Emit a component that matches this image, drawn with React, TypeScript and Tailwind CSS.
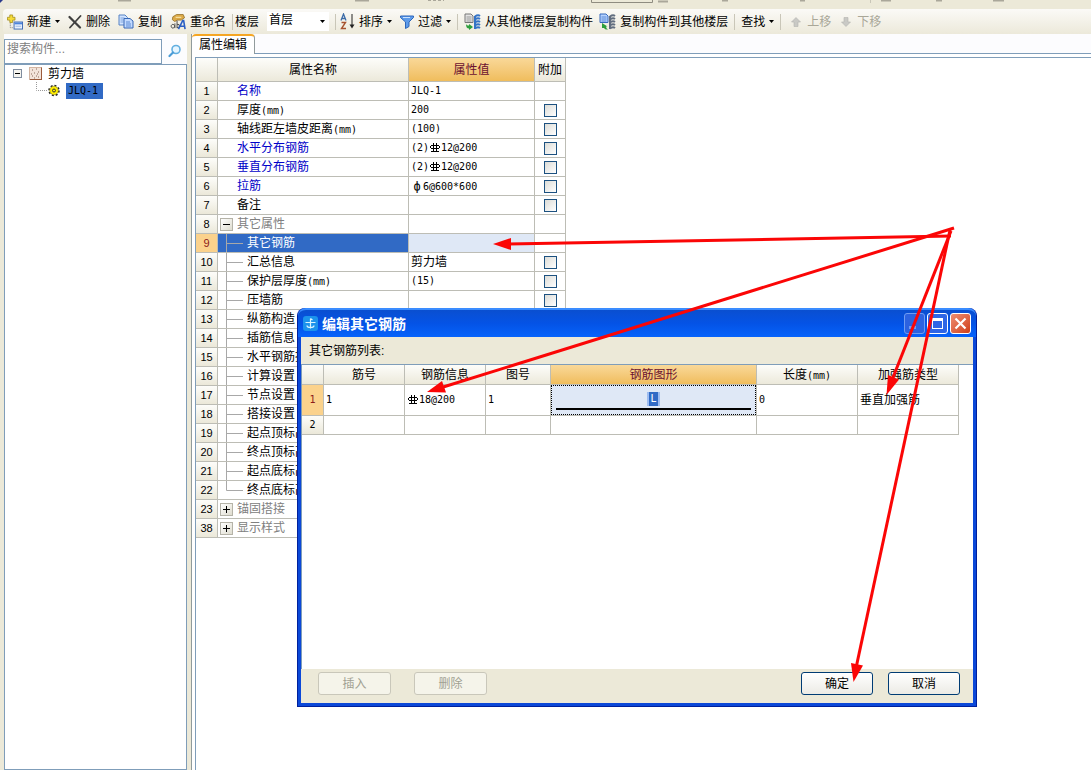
import type { ReactNode } from 'react';

interface PropertyRow {
  no: number;
  name: string;
  unit?: string;
  value?: ReactNode;
  kind?: 'link' | 'group' | 'child';
  open?: boolean;
  check?: boolean;
  last?: boolean;
}

const mono = "text-[10px] font-['DejaVu_Sans_Mono','Noto_Sans_CJK_SC',monospace]";

function Rebar() {
  return (
    <svg viewBox="0 0 12 11" className="inline-block w-3 h-[11px] align-[-2px]" fill="none" stroke="#000">
      <path d="M2 3.500h8M2 6.500h8M1.500 4v2M10.500 4v2M4.500 1v9M7.500 1v9M2 9.500h8" />
    </svg>
  );
}

const rows: PropertyRow[] = [
  { no: 1, name: '名称', kind: 'link', value: 'JLQ-1' },
  { no: 2, name: '厚度', unit: '(mm)', value: '200', check: true },
  { no: 3, name: '轴线距左墙皮距离', unit: '(mm)', value: '(100)', check: true },
  { no: 4, name: '水平分布钢筋', kind: 'link', value: <>(2)<Rebar />12@200</>, check: true },
  { no: 5, name: '垂直分布钢筋', kind: 'link', value: <>(2)<Rebar />12@200</>, check: true },
  { no: 6, name: '拉筋', kind: 'link', value: <><span className="inline-block w-3 text-center text-xs leading-4">ф</span>6@600*600</>, check: true },
  { no: 7, name: '备注', check: true },
  { no: 8, name: '其它属性', kind: 'group', open: true },
  { no: 9, name: '其它钢筋', kind: 'child' },
  { no: 10, name: '汇总信息', kind: 'child', value: <span className="text-xs">剪力墙</span>, check: true },
  { no: 11, name: '保护层厚度', unit: '(mm)', kind: 'child', value: '(15)', check: true },
  { no: 12, name: '压墙筋', kind: 'child', check: true },
  { no: 13, name: '纵筋构造', kind: 'child', check: true },
  { no: 14, name: '插筋信息', kind: 'child', check: true },
  { no: 15, name: '水平钢筋拐角', kind: 'child', check: true },
  { no: 16, name: '计算设置', kind: 'child', check: true },
  { no: 17, name: '节点设置', kind: 'child', check: true },
  { no: 18, name: '搭接设置', kind: 'child', check: true },
  { no: 19, name: '起点顶标高', kind: 'child', check: true },
  { no: 20, name: '终点顶标高', kind: 'child', check: true },
  { no: 21, name: '起点底标高', kind: 'child', check: true },
  { no: 22, name: '终点底标高', kind: 'child', check: true, last: true },
  { no: 23, name: '锚固搭接', kind: 'group' },
  { no: 38, name: '显示样式', kind: 'group' },
];

const headBg = 'bg-linear-to-b from-[#fdfdfa] to-[#ebe8d9]';
const activeBg = 'bg-linear-to-b from-[#f9d898] to-[#f0bd5c]';

function Caret() {
  return (
    <svg viewBox="0 0 5 3" className="w-[5px] h-[3px] shrink-0">
      <path d="M0 0h5L2.500 3z" fill="currentColor" />
    </svg>
  );
}

function Divider() {
  return <span className="w-px h-4 bg-[#c9c6b8] shrink-0" />;
}

function NewIcon() {
  return (
    <svg viewBox="0 0 17 17" className="w-4 h-4 shrink-0">
      <path d="M3 1h3v2.500h2.500v3H6V9H3V6.500H.5v-3H3z" fill="#f6dc3a" stroke="#a08a18" strokeWidth=".8" />
      <path d="M3.500 10v4.500H7" fill="none" stroke="#777" strokeDasharray="1 1" />
      <rect x="7.500" y="8.500" width="9" height="7.500" fill="#e8f1fd" stroke="#3c68b4" />
      <path d="M8 9h8v2H8z" fill="#4b83dd" />
      <path d="M9 13h6" stroke="#9db9e4" />
    </svg>
  );
}

function CrossIcon() {
  return (
    <svg viewBox="0 0 14 14" className="w-[14px] h-[14px] shrink-0" fill="none" stroke="#3f3f3f" strokeLinecap="round">
      <path d="M1.500 2l10.500 10.500" strokeWidth="2.200" />
      <path d="M12.500 1L2 12.500" strokeWidth="1.800" />
    </svg>
  );
}

function CopyIcon() {
  return (
    <svg viewBox="0 0 16 15" className="w-4 h-[15px] shrink-0">
      <path d="M1 1h6l2.500 2.500V11H1z" fill="#d2e4ff" stroke="#5682c4" />
      <path d="M2.500 4h4M2.500 6h3M2.500 8h3" stroke="#7da3de" />
      <path d="M6 4.500h6l3 2.500v7H6z" fill="#c2daff" stroke="#3767b6" />
      <path d="M8 8h4M8 10h5M8 12h5" stroke="#5c8ad4" />
    </svg>
  );
}

function RenameIcon() {
  return (
    <svg viewBox="0 0 17 17" className="w-4 h-4 shrink-0">
      <path d="M3 3l4-2.500h7L15.500 4 12 6.500H8L5 8 2.500 6z" fill="#dcaa48" stroke="#8d6a22" strokeWidth=".8" />
      <path d="M6 3.500h6" stroke="#fff0bd" />
      <path d="M3 11a1.800 2 0 1 0 .1 0M5.200 10v5M7.500 7v8M7.500 11q3-.5 2.500 2-.5 2-2.500 1.500" fill="none" stroke="#444" />
      <path d="M9 16l4.500-9h1L16 16M11 13h4.500" fill="none" stroke="#2c60c4" strokeWidth="1.700" />
    </svg>
  );
}

function SortIcon() {
  return (
    <svg viewBox="0 0 15 17" className="w-[15px] h-[17px] shrink-0" fill="none">
      <path d="M1 7.500L3.500 1 6 7.500M2 5.500h3" stroke="#3d6ca8" strokeWidth="1.300" />
      <path d="M1.500 9.500h4l-4 6h4.500" stroke="#a6522e" strokeWidth="1.400" />
      <path d="M12 1v12" stroke="#222" />
      <path d="M9.500 11.500h5L12 15.500z" fill="#222" />
    </svg>
  );
}

function FilterIcon() {
  return (
    <svg viewBox="0 0 14 14" className="w-[14px] h-[14px] shrink-0">
      <path d="M.5 1h13v1.500L9 7v4.500L5.500 13.500V7L.5 2.500z" fill="#5d9bea" stroke="#2c65b9" />
      <path d="M3 2.500h7" stroke="#c9e2ff" />
    </svg>
  );
}

function FloorIcon({ flip }: { flip?: boolean }) {
  return (
    <svg viewBox="0 0 17 17" className="w-[17px] h-[17px] shrink-0">
      <path d="M1 1h6l2 2v6.500H1z" fill={flip ? '#b5d2ff' : '#e4e4e4'} stroke={flip ? '#3769bd' : '#777'} />
      <path d="M2.500 4h5M2.500 6h5M2.500 8h5" stroke={flip ? '#5c8ad4' : '#999'} />
      <path d="M11 3.500q3-2 5-.5M11 6.500q3-2 5-.5M11 9.500q3-2 5-.5M11 12.500q3-2 5-.5M11 15.500q3-2 5-.5M11 3v13" fill="none" stroke={flip ? '#626e80' : '#3473c6'} strokeWidth="2" />
      <path d={flip ? 'M3 10v5h2q1 2 4 1.500-2-1-2-3h1.500z' : 'M2 11q1 2 3 1.500V11l4 3-4 3v-1.500q-3 0-3-4.500z'} fill="#2c9e3c" />
    </svg>
  );
}

function MoveArrow({ down }: { down?: boolean }) {
  return (
    <svg viewBox="0 0 10 10" className={`w-[10px] h-[10px] mr-0.5 shrink-0 ${down ? 'rotate-180' : ''}`}>
      <path d="M5 .5L9.500 5H7v4.500H3V5H.5z" fill="#c9c9c5" stroke="#b4b4ae" strokeWidth=".6" />
    </svg>
  );
}

function ToolButton({ icon, label, caret, disabled }: { icon?: ReactNode; label: string; caret?: boolean; disabled?: boolean }) {
  return (
    <button disabled={disabled} className="flex items-center gap-1 whitespace-nowrap disabled:text-[#a9a798]">
      {icon}
      <span>{label}</span>
      {caret && <Caret />}
    </button>
  );
}

// lower edge of the toolbar above, most of it is scrolled out of view
function UpperToolbar() {
  return (
    <div className="h-[9px] overflow-hidden">
      <svg viewBox="0 0 1091 9" className="w-[1091px] h-[9px]" fill="none" stroke="#aaa79a">
        <path d="M0 0h3L0 3z" fill="#2a3a8c" stroke="none" />
        <path d="M591.500 0v2.500h61V0" stroke="#8f8c80" />
        <path d="M118 .5h13M355 .5h14M658 1.500h10M722 .5h6M800 .5h5M881 .5h10M936 .5h6M993 .5h11" strokeWidth="2" />
        <path d="M428 .5h16" strokeDasharray="3 2" />
        <path d="M870.500 0v3" stroke="#c9c6b8" />
      </svg>
    </div>
  );
}

function Toolbar() {
  return (
    <div className="flex items-center h-[25px] ml-[3px] pl-1 gap-1.5 rounded-l bg-linear-to-b from-[#fbfaf7] to-[#ece9da]">
      <div className="flex items-center gap-2">
        <ToolButton icon={<NewIcon />} label="新建" caret />
        <ToolButton icon={<CrossIcon />} label="删除" />
        <ToolButton icon={<CopyIcon />} label="复制" />
        <ToolButton icon={<RenameIcon />} label="重命名" />
      </div>
      <Divider />
      <div className="flex items-center gap-2 -ml-1">
        <label htmlFor="floor" className="whitespace-nowrap">楼层</label>
        <div className="relative flex items-center w-[62px] bg-white">
          <select id="floor" className="appearance-none w-full h-[19px] pl-0.5 pb-1 outline-none">
            <option>首层</option>
          </select>
          <span className="absolute right-1 pointer-events-none"><Caret /></span>
        </div>
      </div>
      <Divider />
      <div className="flex items-center gap-2 -ml-0.5">
        <ToolButton icon={<SortIcon />} label="排序" caret />
        <ToolButton icon={<FilterIcon />} label="过滤" caret />
      </div>
      <Divider />
      <ToolButton icon={<FloorIcon />} label="从其他楼层复制构件" />
      <ToolButton icon={<FloorIcon flip />} label="复制构件到其他楼层" />
      <Divider />
      <ToolButton label="查找" caret />
      <Divider />
      <div className="flex items-center gap-2.5 pl-1">
        <ToolButton icon={<MoveArrow />} label="上移" disabled />
        <ToolButton icon={<MoveArrow down />} label="下移" disabled />
      </div>
    </div>
  );
}

function Sidebar() {
  return (
    <aside className="flex flex-col w-[183px] ml-1 shrink-0">
      <div className="flex items-center h-[30px] pt-1 bg-[#fcfcfe]">
        <input
          type="text"
          aria-label="搜索构件"
          placeholder="搜索构件..."
          className="w-[158px] h-[25px] pl-0.5 pb-1 bg-white border border-[#7f9db9] outline-none placeholder:text-[#808080]"
        />
        <button aria-label="搜索" className="flex-1 flex justify-center">
          <svg viewBox="0 0 14 14" className="w-[14px] h-[14px]" fill="none">
            <circle cx="8" cy="5.500" r="4" fill="#e6f5ff" stroke="#62afe0" strokeWidth="1.600" />
            <path d="M5 8.500L1.500 12" stroke="#4a9bd6" strokeWidth="2.200" strokeLinecap="round" />
          </svg>
        </button>
      </div>
      <div className="flex-1 bg-white border border-[#7f9db9]">
        <div className="flex items-center h-[17px] pl-2 gap-[7px]">
          <svg viewBox="0 0 9 9" className="w-[9px] h-[9px]">
            <rect x=".5" y=".5" width="8" height="8" fill="#f5f4ef" stroke="#7f8c9e" />
            <path d="M2 4.500h5" stroke="#000" />
          </svg>
          <svg viewBox="0 0 14 13" className="w-[14px] h-[13px]">
            <rect x=".5" y=".5" width="12" height="12" fill="#f3e4da" stroke="#d3b5a2" />
            <path d="M12.500 .5v12M1 12.500h12" stroke="#9b5b3c" />
            <path d="M3 3h1M7 2h1M5 6h1M9 5h1M3 9h1M7 9h1M9 10h1M5 11h1M2 7h1M8 7h1" stroke="#8a6a5a" />
          </svg>
          <span className="-ml-0.5">剪力墙</span>
        </div>
        <div className="flex items-center h-[17px] pl-[31px]">
          <svg viewBox="0 0 26 17" className="w-[26px] h-[17px]">
            <path d="M.5 0v8.500H12" fill="none" stroke="#9a9a9a" strokeDasharray="1 1" />
            <circle cx="18" cy="8.500" r="5" fill="none" stroke="#222" strokeWidth="1.500" strokeDasharray="2 1.900" />
            <circle cx="18" cy="8.500" r="4.300" fill="#ffee00" stroke="#6b6200" strokeWidth=".5" />
            <circle cx="18" cy="8.500" r="1.500" fill="none" stroke="#333" />
          </svg>
          <span className={`px-0.5 ml-1 h-4 leading-4 w-[37px] bg-[#316ac5] ${mono}`}>JLQ-1</span>
        </div>
      </div>
    </aside>
  );
}

function NameCell({ row }: { row: PropertyRow }) {
  const text = (
    <span>
      {row.name}
      {row.unit && <span className={mono}>{row.unit}</span>}
    </span>
  );
  if (row.kind === 'group') {
    return (
      <div className="flex items-center h-[18px] pl-0.5 gap-1 text-[#808080]">
        <button aria-label={row.name} className="w-[13px] h-[13px] border border-[#b5b3a8] bg-linear-to-br from-white to-[#dedccf]">
          <svg viewBox="0 0 11 11" className="w-[11px] h-[11px]">
            <path d={row.open ? 'M2 5.500h7' : 'M2 5.500h7M5.500 2v7'} stroke="#000" />
          </svg>
        </button>
        {text}
      </div>
    );
  }
  if (row.kind === 'child') {
    return (
      <div className="flex items-center h-[18px] pl-2 gap-1">
        <svg viewBox="0 0 17 18" className="w-[17px] h-[18px] shrink-0">
          <path d={row.last ? 'M.5 0v9.500H17' : 'M.5 0v18M.5 9.500H17'} fill="none" stroke="#a8a8a8" />
        </svg>
        {text}
      </div>
    );
  }
  return <div className={`flex items-center h-[18px] pl-[19px] ${row.kind === 'link' ? 'text-[#0000c8]' : ''}`}>{text}</div>;
}

function PropertyTable() {
  return (
    <table className="table-fixed w-[370px] border-separate border-spacing-0 whitespace-nowrap">
      <colgroup>
        <col className="w-[22px]" />
        <col className="w-[191px]" />
        <col className="w-[126px]" />
        <col className="w-[31px]" />
      </colgroup>
      <thead>
        <tr className={`h-6 ${headBg}`}>
          <th className="border-r border-b border-[#bdbdb5]" />
          <th className="border-r border-b border-[#bdbdb5] font-normal">属性名称</th>
          <th className={`border-r border-b border-[#bdbdb5] font-normal text-[#6b1030] ${activeBg}`}>属性值</th>
          <th className="border-r border-b border-[#bdbdb5] font-normal">附加</th>
        </tr>
      </thead>
      <tbody>
        {rows.map(row => {
          const active = row.no === 9;
          return (
            <tr key={row.no} className="h-[19px]">
              <td className={`border-r border-b border-[#bdbdb5] p-0 text-center text-[11px] ${active ? 'bg-[#fbd28c] text-[#8b1a1a]' : headBg}`}>{row.no}</td>
              <td className={`border-r border-b border-[#bdbdb5] p-0 overflow-hidden ${active ? 'bg-[#316ac5] text-white' : ''}`}>
                <NameCell row={row} />
              </td>
              <td className={`border-r border-b border-[#bdbdb5] py-0 px-0.5 leading-4 ${mono} ${active ? 'bg-[#dfe8f6]' : ''}`}>{row.value}</td>
              <td className="border-r border-b border-[#bdbdb5] p-0">
                {row.check && (
                  <input
                    type="checkbox"
                    aria-label={`附加 ${row.name}`}
                    className="appearance-none block mx-auto w-[13px] h-[13px] border border-[#1c5180] bg-linear-to-br from-[#dcdcd7] to-white"
                  />
                )}
              </td>
            </tr>
          );
        })}
      </tbody>
    </table>
  );
}

function PropertyPanel() {
  return (
    <main className="flex flex-col flex-1 min-w-0 ml-1 bg-white border-l border-[#919b9c]">
      <div className="flex h-5 bg-[#fcfcfe]">
        <button className="w-[63px] h-5 border-t-2 border-t-[#f5a623] border-r border-r-[#919b9c] rounded-t-sm bg-white whitespace-nowrap">属性编辑</button>
        <span className="flex-1 border-b border-[#7f9db9]" />
      </div>
      <div className="flex-1 mt-[3px] ml-[3px] border-t border-l border-[#7f9db9]">
        <PropertyTable />
      </div>
    </main>
  );
}

const dialogCols = ['筋号', '钢筋信息', '图号', '钢筋图形', '长度', '加强筋类型'];

function RebarTable() {
  const cell = 'border-r border-b border-[#bdbdb5] py-0 px-0.5';
  return (
    <table className="table-fixed w-[657px] border-separate border-spacing-0 whitespace-nowrap">
      <colgroup>
        <col className="w-[22px]" />
        <col className="w-[81px]" />
        <col className="w-[81px]" />
        <col className="w-[65px]" />
        <col className="w-[206px]" />
        <col className="w-[101px]" />
        <col className="w-[101px]" />
      </colgroup>
      <thead>
        <tr className={`h-5 ${headBg}`}>
          <th className={cell} />
          {dialogCols.map(col => (
            <th key={col} className={`${cell} font-normal ${col === '钢筋图形' ? `text-[#6b1030] ${activeBg}` : ''}`}>
              {col}
              {col === '长度' && <span className={mono}>(mm)</span>}
            </th>
          ))}
        </tr>
      </thead>
      <tbody>
        <tr className={`h-[31px] ${mono}`}>
          <td className={`${cell} text-center bg-[#fbd28c] text-[#8b1a1a]`}>1</td>
          <td className={cell}>1</td>
          <td className={cell}><Rebar />18@200</td>
          <td className={cell}>1</td>
          <td className="border-r border-b border-[#bdbdb5] p-0">
            <div className="flex flex-col items-center justify-end h-[30px] px-1 pb-1 border border-dotted border-black bg-[#dfe8f6]">
              <span className="px-px mb-0.5 leading-[14px] bg-[#316ac5] border-x-2 border-[#9dbcf0] text-white">L</span>
              <span className="w-full h-0.5 bg-black" />
            </div>
          </td>
          <td className={cell}>0</td>
          <td className={`${cell} text-xs`}>垂直加强筋</td>
        </tr>
        <tr className={`h-[19px] ${mono}`}>
          <td className={`${cell} text-center ${headBg}`}>2</td>
          <td className={cell} />
          <td className={cell} />
          <td className={cell} />
          <td className={cell} />
          <td className={cell} />
          <td className={cell} />
        </tr>
      </tbody>
    </table>
  );
}

function EditDialog() {
  const disabledBtn = 'w-[73px] h-[23px] rounded-[3px] border border-[#c9c7ba] bg-[#f5f4ea] text-[#a1a192]';
  const btn = 'w-[72px] h-[23px] rounded-[3px] border border-[#003c74] bg-linear-to-b from-white to-[#ecebe5]';
  return (
    <section role="dialog" aria-label="编辑其它钢筋" className="absolute left-[297px] top-[308px] flex flex-col w-[680px] h-[399px] px-[3px] pb-[3px] rounded-t-lg border-x border-b border-[#00209c] bg-[#0b48d8]">
      <header className="flex items-center h-[29px] -mx-[3px] px-[5px] gap-1 rounded-t-lg bg-linear-to-b from-[#0a4fd0] via-[#0453e6] to-[#0663fb] border-t-2 border-[#3a8cff] text-white">
        <svg viewBox="0 0 15 15" className="w-[15px] h-[15px]">
          <rect width="15" height="15" rx="3" fill="#1c93ec" />
          <path d="M7.500 2.500v10M2.500 6.500h10M7.500 2.500l2 1.500M4 9.500q0 2 3.500 2t3.500-2" fill="none" stroke="#d9f4ff" strokeWidth="1.200" />
        </svg>
        <h2 className="flex-1 text-sm font-bold">编辑其它钢筋</h2>
        <div className="flex gap-0.5">
          <button aria-label="最小化" disabled className="flex items-center justify-center w-[21px] h-[21px] rounded-[3px] border border-[#6f9cf2] bg-[#2c62e0]">
            <span className="w-[7px] h-[3px] mt-2 mr-1 bg-[#6f9cf2]" />
          </button>
          <button aria-label="最大化" className="flex items-center justify-center w-[21px] h-[21px] rounded-[3px] border border-white bg-[#2f66e6]">
            <span className="w-[11px] h-[11px] border border-t-[3px] border-white" />
          </button>
          <button aria-label="关闭" className="flex items-center justify-center w-[21px] h-[21px] rounded-[3px] border border-white bg-linear-to-br from-[#ee8d70] to-[#cf3d13]">
            <svg viewBox="0 0 13 13" className="w-[13px] h-[13px]">
              <path d="M1.500 1.500l10 10M11.500 1.500l-10 10" stroke="#fff" strokeWidth="2.200" />
            </svg>
          </button>
        </div>
      </header>
      <p className="h-[27px] pl-2 leading-[29px] bg-[#ece9d8]">其它钢筋列表:</p>
      <div className="flex-1 bg-white border-t border-l border-[#7f9db9]">
        <RebarTable />
      </div>
      <footer className="flex h-[34px] pt-[3px] pl-[17px] pr-[13px] bg-[#ece9d8]">
        <button disabled className={disabledBtn}>插入</button>
        <button disabled className={`${disabledBtn} ml-[23px]`}>删除</button>
        <button className={`${btn} ml-auto`}>确定</button>
        <button className={`${btn} ml-[15px]`}>取消</button>
      </footer>
    </section>
  );
}

function Arrows() {
  return (
    <svg viewBox="0 0 1091 770" className="absolute left-0 top-0 w-[1091px] h-[770px] pointer-events-none">
      <g stroke="#fb0606" strokeWidth="3">
        <path d="M951 236L508 244" />
        <path d="M954 228L440 388" />
        <path d="M951 231L892 380" />
        <path d="M950 230L856 668" />
      </g>
      <g fill="#fb0606">
        <path d="M493 244l18-6v12z" />
        <path d="M427 392l15-11 4 11.500z" />
        <path d="M886.500 395l1.500-20 11 4.500z" />
        <path d="M853.500 682l-2.500-19 12 2.500z" />
      </g>
    </svg>
  );
}

export default function App() {
  return (
    <div className="relative flex flex-col min-h-screen overflow-hidden bg-[#ece9d8] text-xs text-black font-['Liberation_Sans','Noto_Sans_CJK_SC',sans-serif]">
      <UpperToolbar />
      <Toolbar />
      <div className="flex flex-1">
        <Sidebar />
        <PropertyPanel />
      </div>
      <EditDialog />
      <Arrows />
    </div>
  );
}
